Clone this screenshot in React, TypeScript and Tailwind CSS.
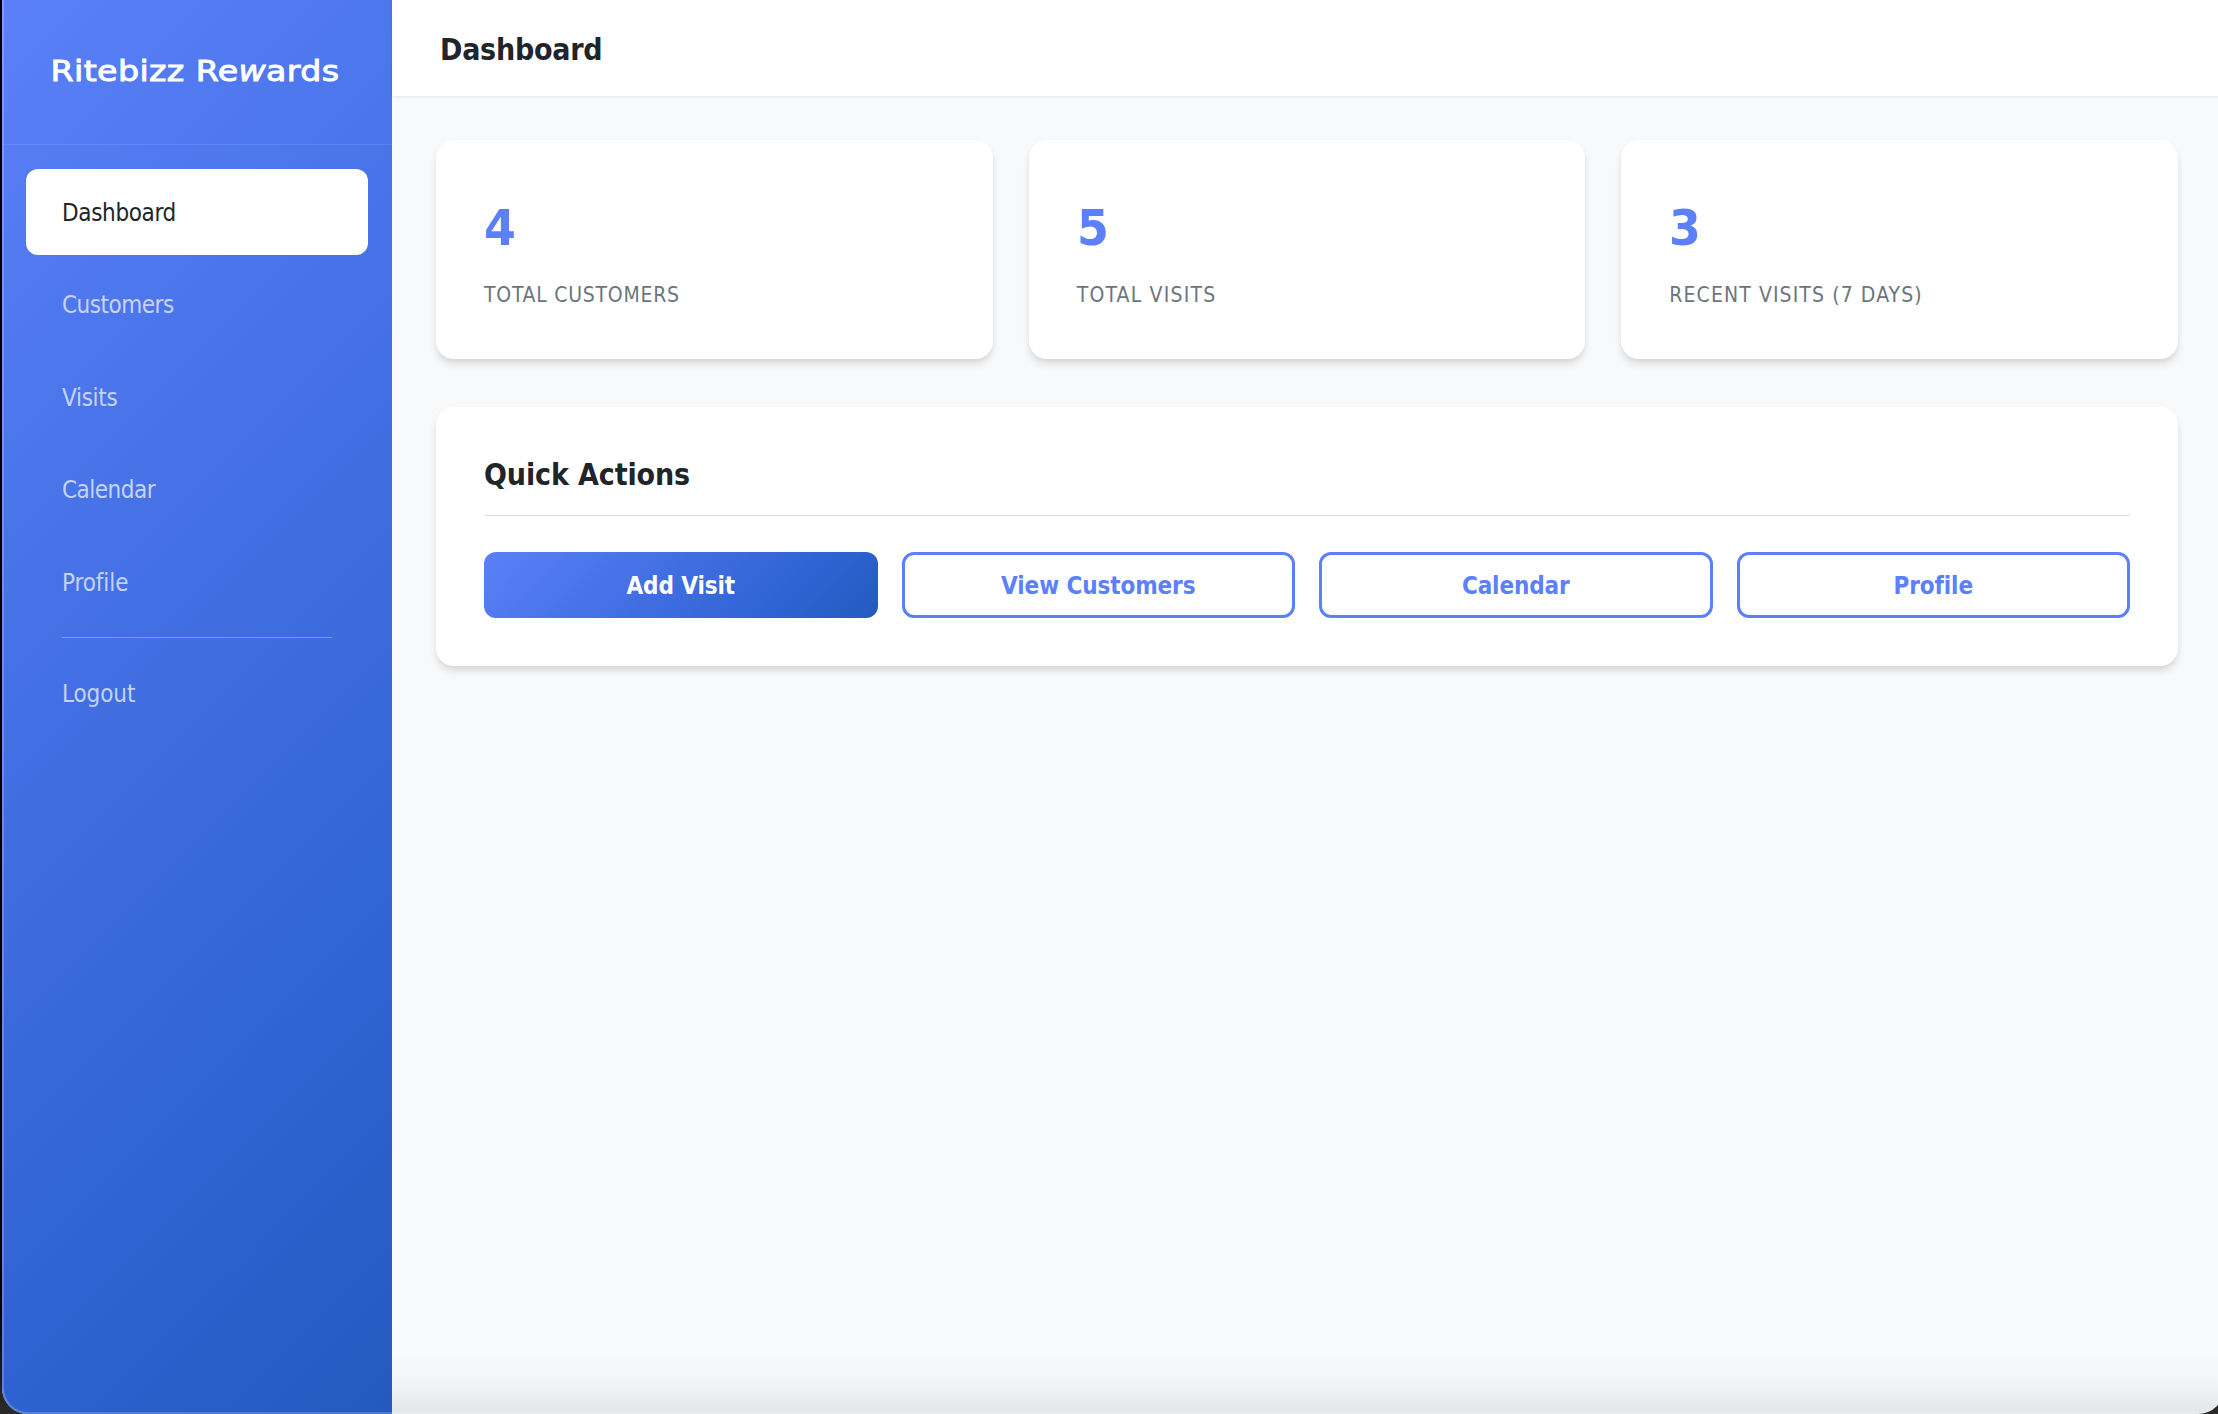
import React, { useState } from "react";

const NAV_ITEMS = [
  { name: "Dashboard", tracking: "tracking-[-0.35px]" },
  { name: "Customers", tracking: "tracking-[-0.5px]" },
  { name: "Visits", tracking: "tracking-[-0.3px]" },
  { name: "Calendar", tracking: "tracking-[-0.5px]" },
  { name: "Profile", tracking: "tracking-[-0.1px]" },
];

const STATS = [
  { value: 4, label: "Total Customers", tracking: "tracking-[0.75px]" },
  { value: 5, label: "Total Visits", tracking: "tracking-[1.2px]" },
  { value: 3, label: "Recent Visits (7 days)", tracking: "tracking-[1.1px]" },
];

const ACTIONS = ["Add Visit", "View Customers", "Calendar", "Profile"];

const CARD = "rounded-[18px] bg-white shadow-[0_6px_9px_-1.5px_rgba(0,0,0,0.1),0_3px_6px_-1.5px_rgba(0,0,0,0.06)]";
const GRADIENT = "bg-[linear-gradient(135deg,#5b80f8_0%,#2f63d3_75%,#245abf_100%)]";

function Sidebar({ active, onSelect }: { active: string; onSelect: (name: string) => void }) {
  return (
    <aside className={`w-[390px] shrink-0 ${GRADIENT}`}>
      <div className="flex h-[145px] items-center justify-center border-b border-white/10 pr-[3px]">
        <span className="inline-block scale-x-[1.165] whitespace-nowrap font-['DejaVu_Sans',sans-serif] text-[28.5px] leading-none tracking-[0.35px] text-white [-webkit-text-stroke:0.9px_white]">
          Ritebizz Re<i>w</i>ards
        </span>
      </div>
      <nav className="flex flex-col px-6 pt-6">
        {NAV_ITEMS.map(item => (
          <button
            key={item.name}
            onClick={() => onSelect(item.name)}
            className={`mb-[6.4px] flex h-[86px] items-center rounded-xl pt-[2px] pl-9 text-[24px] ${item.tracking} ${
              active === item.name ? "bg-white text-[#212529]" : "text-white/70"
            }`}
          >
            {item.name}
          </button>
        ))}
        <div className="mx-9 mt-[6px] mb-3 h-px bg-white/30" />
        <button className="flex h-[86px] items-center rounded-xl pt-[2px] pl-9 text-[24px] tracking-[-0.1px] text-white/70">
          Logout
        </button>
      </nav>
    </aside>
  );
}

export default function App() {
  const [active, setActive] = useState("Dashboard");

  return (
    <div className="h-[1414px] w-[2218px] overflow-hidden bg-[linear-gradient(180deg,#000_0%,#000_92%,#2b2b2b_100%)] pl-[2px] font-['DejaVu_Sans_Condensed','DejaVu_Sans',sans-serif]">
      <div className="relative flex h-full w-[2222px] overflow-hidden rounded-b-[26px] bg-[#f8f9fb]">
        <Sidebar active={active} onSelect={setActive} />

        <div className="flex flex-1 flex-col bg-[linear-gradient(180deg,rgba(0,0,0,0)_95.5%,rgba(0,0,0,0.015)_97.5%,rgba(0,0,0,0.08)_100%)]">
          <header className="flex h-24 items-center bg-white pt-[3px] pl-12 shadow-[0_1px_3px_rgba(0,0,0,0.07)]">
            <h1 className="text-[30px] font-bold tracking-[-0.25px] text-[#212529]">Dashboard</h1>
          </header>

          <main className="pt-11 pr-[46px] pl-11">
            <div className="grid grid-cols-3 gap-9">
              {STATS.map(s => (
                <div key={s.label} className={`h-[219px] px-12 pt-[59px] ${CARD}`}>
                  <div className="origin-left scale-x-[1.04] text-[49px] leading-[60px] font-bold text-[#5b80fa]">{s.value}</div>
                  <div className={`mt-5 text-[21px] leading-8 text-[#6c757d] uppercase ${s.tracking}`}>
                    {s.label}
                  </div>
                </div>
              ))}
            </div>

            <section className={`mt-12 p-12 ${CARD}`}>
              <h2 className="border-b border-[#dcdee0] pb-5 text-[30px] leading-10 font-bold tracking-[-0.12px] text-[#212529]">
                Quick Actions
              </h2>
              <div className="mt-9 grid grid-cols-4 gap-6">
                {ACTIONS.map((name, i) => (
                  <button
                    key={name}
                    className={`h-[66px] rounded-xl pt-[2px] text-[24px] font-bold tracking-[-0.1px] ${
                      i === 0 ? `text-white ${GRADIENT}` : "border-3 border-[#5b80fa] text-[#5b80fa]"
                    }`}
                  >
                    {name}
                  </button>
                ))}
              </div>
            </section>
          </main>
        </div>

        {/* window edge highlight */}
        <div className="pointer-events-none absolute inset-0 rounded-b-[26px] border-b-2 border-l-2 border-white/20" />
      </div>
    </div>
  );
}
